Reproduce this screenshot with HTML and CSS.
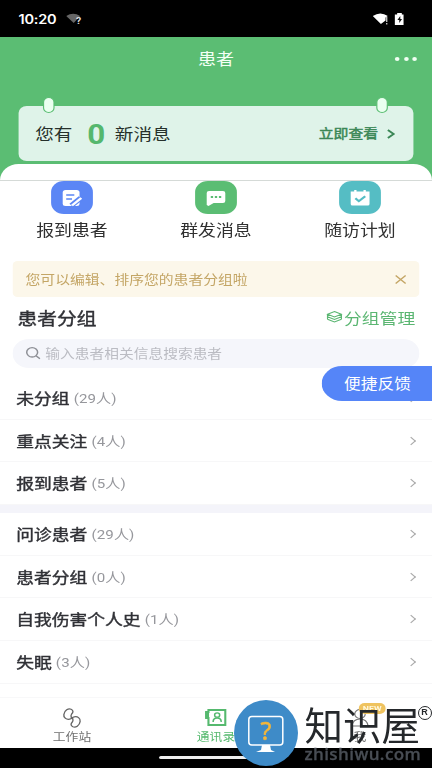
FILE: index.html
```html
<!DOCTYPE html>
<html lang="zh-CN">
<head>
<meta charset="utf-8">
<title>患者</title>
<link rel="stylesheet" href="styles.css">
</head>
<body>
<div class="app">
  <div class="status">
    <span class="time">10:20</span>
    <svg class="wifi-off" width="15" height="12" viewBox="0 0 15 12"><path d="M0 3Q6 -1.500 12 3L6.500 10Z" fill="#666"/><text x="8.500" y="11" font-size="9" font-weight="700" fill="#ddd">?</text></svg>
    <span class="grow"></span>
    <svg width="28" height="14" viewBox="0 0 28 14"><path d="M0 4Q6.500 -1 13 4L11 5.500V8.500L7 12Z" fill="#fff"/><path d="M12 5v5M12 11v1.500" stroke="#bbb" stroke-width="1.200"/><path d="M19.500 2.500H21V1h4v1.500h1.500V13h-7.500V2.500Z" fill="#fff"/><path d="M23.700 4l-2.500 4h1.600v3l2.400-4h-1.500Z" fill="#111"/></svg>
  </div>
  <header class="top">
    <div class="titlebar"><h1>患者</h1><div class="dots"><i></i><i></i><i></i></div></div>
    <div class="message">
      <b class="ring left"></b><b class="ring right"></b>
      <span>您有</span><strong>0</strong><span>新消息</span>
      <em>立即查看</em>
      <svg width="8" height="10" viewBox="0 0 8 10"><path d="M1 1l5 4-5 4" fill="none" stroke="#3b8756" stroke-width="1.700"/></svg>
    </div>
  </header>
  <main>
    <div class="sheet-top"></div>
    <div class="actions">
      <div><span class="tile blue"><svg width="20" height="20" viewBox="0 0 20 20"><rect x="2" y="2" width="14.500" height="16" rx="2.500" fill="#fff"/><path d="M5 7h7M5 11h5" stroke="#5b86f5" stroke-width="1.500"/><path d="M9.500 17.500l8-7.500" stroke="#5b86f5" stroke-width="5"/><path d="M10 17.500l8-7.500" stroke="#fff" stroke-width="2.300"/></svg></span>报到患者</div>
      <div><span class="tile green"><svg width="20" height="20" viewBox="0 0 20 20"><path d="M4 3h12q2 0 2 2v8q0 2-2 2H8l-4.500 3-1.500-1V5q0-2 2-2Z" fill="#fff"/><path d="M5.500 9h2M9 9h2M12.500 9h2" stroke="#5bbd73" stroke-width="2"/></svg></span>群发消息</div>
      <div><span class="tile teal"><svg width="20" height="20" viewBox="0 0 20 20"><path d="M2 3.500h3V2h2v1.500h6V2h2v1.500h3.200V16q0 1.500-1.500 1.500H3.500Q2 17.500 2 16Z" fill="#fff"/><path d="M6 10.200l3 3 5.500-5" fill="none" stroke="#55bdc4" stroke-width="2"/></svg></span>随访计划</div>
    </div>
    <div class="notice"><span>您可以编辑、排序您的患者分组啦</span><svg width="10" height="9" viewBox="0 0 10 9"><path d="M.7.5l8.600 8M9.300.5l-8.600 8" stroke="#c4a666" stroke-width="1.200"/></svg></div>
    <div class="heading"><h2>患者分组</h2><span class="manage"><svg width="14" height="14" viewBox="0 0 14 14"><path d="M7 1.500l6 2.700-6 2.800-6-2.800ZM1 6.700l6 2.800 6-2.800M1 9.200L7 12l6-2.800M1 4.200v5M13 4.200v5" fill="none" stroke="#5bb672" stroke-width="1"/></svg>分组管理</span></div>
    <div class="search"><svg width="13" height="14" viewBox="0 0 13 14"><circle cx="5.700" cy="6.300" r="4.700" fill="none" stroke="#8e9096" stroke-width="1.300"/><path d="M9 9.800l3.400 2.900" stroke="#8e9096" stroke-width="1.400"/></svg>输入患者相关信息搜索患者</div>
    <ul class="first">
      <li><b>未分组</b><span>(29人)</span><i></i></li>
      <li><b>重点关注</b><span>(4人)</span><i></i></li>
      <li><b>报到患者</b><span>(5人)</span><i></i></li>
    </ul>
    <ul>
      <li><b>问诊患者</b><span>(29人)</span><i></i></li>
      <li><b>患者分组</b><span>(0人)</span><i></i></li>
      <li><b>自我伤害个人史</b><span>(1人)</span><i></i></li>
      <li><b>失眠</b><span>(3人)</span><i></i></li>
    </ul>
  </main>
  <nav>
    <div><svg width="18" height="22" viewBox="0 0 18 22"><path d="M8.500 11.500C4 14 1.500 10 2 7.500C2.500 3 6 1.200 8.200 2.200C10.500 3.400 10 5.500 8.700 7C7.500 8.500 8.500 9.500 8.500 11.500ZM9.500 10.500C14 8 16.500 12 16 14.500C15.500 19 12 20.800 9.800 19.800C7.500 18.600 8 16.500 9.300 15C10.500 13.500 9.500 12.500 9.500 10.500Z" fill="none" stroke="#666" stroke-width="1.200"/></svg>工作站</div>
    <div class="active"><svg width="20" height="22" viewBox="0 0 20 22"><path d="M3.500 3h14.500v15H3.500V11H1.500V5h2Z" fill="none" stroke="#55b96e" stroke-width="1.800"/><path d="M1 4.500h3v6H1Z" fill="#55b96e"/><circle cx="11" cy="8" r="2.200" fill="none" stroke="#55b96e" stroke-width="1.300"/><path d="M7.500 15q0-4 3.500-4t3.500 4" fill="none" stroke="#55b96e" stroke-width="1.300"/></svg>通讯录</div>
    <div class="me"><svg width="20" height="22" viewBox="0 0 20 22"><circle cx="10" cy="7" r="4.500" fill="none" stroke="#777"/><path d="M3 19q1-7 7-7t7 7Z" fill="none" stroke="#777"/></svg>我<span class="new">NEW</span></div>
  </nav>
  <footer><i></i></footer>
  <div class="feedback">便捷反馈</div>
</div>
<div class="mark">
  <svg width="64" height="66" viewBox="0 0 64 66"><ellipse cx="32" cy="33" rx="32" ry="33" fill="#3e8bc8"/><rect x="14.800" y="16.500" width="34" height="28.500" rx="3" fill="none" stroke="#fff" stroke-width="1.500"/><path d="M28 45h8l1 5 4 2H22l5-2Z" fill="#fff"/><text x="32" y="40" text-anchor="middle" font-size="25" fill="#f3b63b" stroke="#f3b63b" stroke-width=".5">?</text></svg>
  <div class="mark-text"><span class="name">知识屋</span><span class="url">zhishiwu.com</span></div>
  <span class="reg">R</span>
</div>
</body>
</html>
```
FILE: styles.css
```css
* { box-sizing: border-box; }
body { margin: 0; width: 432px; height: 768px; overflow: hidden; position: relative; background: #fff; font-family: Roboto, "Noto Sans CJK SC", sans-serif; }
h1, h2, ul { margin: 0; padding: 0; font-weight: 400; list-style: none; }
svg { display: block; flex: none; }
i, em { font-style: normal; }
/* The layout is 372px wide and stretched to the full screen width. */
.app { width: 372px; height: 768px; transform: scaleX(1.1613); transform-origin: 0 0; display: flex; flex-direction: column; position: relative; }
.status { height: 37px; flex: none; background: #000; display: flex; align-items: center; padding: 1px 23px 0 16px; color: #fff; }
.time { font: 600 12.500px Inter, sans-serif; letter-spacing: -.2px; }
.wifi-off { margin-left: 8px; }
.grow { flex: 1; }
.top { height: 143px; flex: none; background: #5bbd73; }
.titlebar { height: 69px; display: grid; place-items: start center; position: relative; color: #f2fff4; padding-top: 11px; }
h1 { font-size: 15.500px; line-height: 24px; }
.dots { position: absolute; right: 13px; top: 20px; display: flex; gap: 3.500px; }
.dots i { width: 4px; height: 4px; border-radius: 50%; background: #f2fff4; }
.message { height: 55px; margin: 0 16.400px; padding: 0 15px 0 14px; border-radius: 7px; background: #dff3e9; display: flex; align-items: center; position: relative; color: #26302b; font-size: 16px; }
.message span { margin-top: -2px; }
.message strong { color: #55b76d; font: 700 27px Roboto, sans-serif; margin: 2px 7px 0 11.500px; width: 18px; text-align: center; }
.message em { margin: -2px 7px 0 auto; font-size: 12.800px; font-weight: 400; color: #3b8756; -webkit-text-stroke: .45px; }
.ring { position: absolute; top: -9px; width: 10px; height: 16px; border: 1.500px solid #5bbd73; border-radius: 5px; background: #eafff0; }
.ring.left { left: 21px; }
.ring.right { right: 22px; }
main { flex: 1; min-height: 0; display: flex; flex-direction: column; }
.sheet-top { height: 17px; flex: none; margin-top: -16px; background: #fff; border-radius: 16px 16px 0 0; border-bottom: 1px solid #d5dad7; }
.actions { height: 80px; flex: none; display: grid; grid-template-columns: repeat(3, 1fr); color: #303030; font-size: 15.400px; line-height: 22px; }
.actions > div { display: flex; flex-direction: column; align-items: center; gap: 6px; }
.tile { width: 36px; height: 33px; border-radius: 11px; display: grid; place-items: center; }
.blue { background: #5b86f5; }
.green { background: #5bbd73; }
.teal { background: #55bdc4; }
.notice { height: 36px; flex: none; margin: 0 11px; padding: 0 11px; border-radius: 4px; background: #fcf7ea; display: flex; align-items: center; justify-content: space-between; color: #c4a666; font-size: 12.750px; }
.notice span { margin-top: -2px; }
.heading { height: 42px; flex: none; display: flex; align-items: center; justify-content: space-between; padding: 0 14.500px 2px 15px; }
h2 { font-size: 17px; color: #303136; -webkit-text-stroke: .4px; }
.manage { display: flex; align-items: center; gap: 1px; color: #5bb672; font-size: 15.300px; }
.search { height: 29px; flex: none; margin: 0 11px 9px; padding: 0 11px 2px; border-radius: 14px; background: #f5f6fb; display: flex; align-items: center; gap: 4px; color: #bbbcc3; font-size: 12.700px; }
li { height: 42.700px; display: flex; align-items: center; padding: 0 15px 0 14px; border-bottom: 1px solid #f7f7f8; }
li b { margin-top: -2px; font-size: 15.300px; font-weight: 400; color: #303136; -webkit-text-stroke: .4px; }
li span { margin: -1px 0 0 3.500px; font-size: 13px; color: #96979c; letter-spacing: .1px; }
li i { margin-left: auto; width: 6px; height: 6px; border: solid #aaa; border-width: 1.200px 1.200px 0 0; transform: rotate(45deg); }
.first { border-bottom: 8px solid #f4f4fa; }
nav { height: 51px; flex: none; background: #fff; border-top: 1px solid #f8f8f9; display: grid; grid-template-columns: repeat(3, 1fr); color: #707070; font-size: 11px; line-height: 14px; }
nav > div { display: flex; flex-direction: column; align-items: center; gap: 2px; padding-top: 9px; position: relative; }
nav .active { color: #55b96e; }
.new { position: absolute; left: 61px; top: 5px; width: 23px; height: 11px; border-radius: 5px; background: #efc35f; color: #fff8dc; font: 700 7.500px/11px Roboto, sans-serif; text-align: center; }
footer { height: 20px; flex: none; background: #000; display: flex; justify-content: center; padding-top: 8px; }
footer i { width: 98px; height: 3px; border-radius: 2px; background: #eee; }
.feedback { position: absolute; right: 0; top: 366px; width: 94.700px; height: 35px; border-radius: 18px 0 0 18px; background: #5585f8; color: #fff; font-size: 14.400px; line-height: 37px; padding-left: 19px; }
.mark { position: absolute; left: 233.500px; top: 700px; display: flex; color: #25282b; font-family: "Noto Sans", sans-serif; }
.mark-text { display: flex; flex-direction: column; margin-left: 7px; padding-top: 1px; }
.name { font: 400 38.500px/44px "Noto Sans CJK SC", sans-serif; white-space: nowrap; }
.url { font: 600 17px/18px "Open Sans", sans-serif; color: #484d54; letter-spacing: .4px; -webkit-text-stroke: .3px; }
.reg { position: absolute; left: 184px; top: 6px; width: 14px; height: 14px; border: 1.500px solid #25282b; border-radius: 50%; font: 700 9px/11px "Liberation Sans", sans-serif; text-align: center; }
```
